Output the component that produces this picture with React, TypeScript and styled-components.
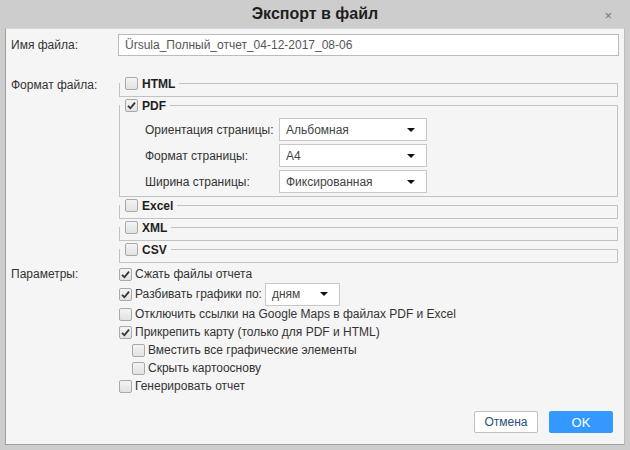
import React from 'react';
import styled, { createGlobalStyle } from 'styled-components';

const GlobalStyle = createGlobalStyle`
  html, body {
    margin: 0;
    padding: 0;
    background: #cdcdcd;
  }
  body {
    font-family: "Liberation Sans", Arial, sans-serif;
    font-size: 12px;
    color: #333333;
  }
`;

const Dialog = styled.div`
  width: 630px;
  height: 450px;
  display: flex;
  flex-direction: column;
  background: #cdcdcd;
`;

const TitleBar = styled.div`
  height: 28px;
  position: relative;
  display: flex;
  align-items: center;
  justify-content: center;
`;

const Title = styled.h1`
  margin: 0;
  font-size: 16px;
  font-weight: bold;
  color: #1e1e1e;
`;

const CloseButton = styled.span`
  position: absolute;
  right: 18px;
  top: 8px;
  font-size: 13px;
  color: #777777;
  cursor: pointer;
`;

const Panel = styled.div`
  flex: 1;
  margin: 0 5px 5px;
  background: #f5f5f5;
  border: 1px solid;
  border-color: #d6d6d6 #bcbcbc #a0a0a0 #a0a0a0;
  display: flex;
  flex-direction: column;
  padding: 5px 5px 11px 5px;
`;

const Form = styled.div`
  display: grid;
  grid-template-columns: 107px 1fr;
  align-items: start;
`;

const Label = styled.label<{ $top?: number }>`
  padding-top: ${(p) => p.$top ?? 0}px;
  line-height: 14px;
  color: #333333;
`;

const TextInput = styled.input`
  height: 22px;
  box-sizing: border-box;
  border: 1px solid #bbbbbb;
  background: #ffffff;
  padding: 0 6px;
  font: inherit;
  font-size: 12px;
  color: #555555;
  outline: none;
  width: 100%;
`;

const Formats = styled.div`
  margin-top: 21px;
  display: flex;
  flex-direction: column;
  padding-right: 1px;
`;

const FormatBox = styled.fieldset`
  margin: 0 0 2px 1px;
  padding: 0;
  border: 1px solid #c2c2c2;
  min-width: 0;
`;

const Legend = styled.legend`
  padding: 0 4px 0 5px;
  display: flex;
  align-items: center;
  gap: 4px;
  height: 13px;
  font-weight: bold;
  color: #1e1e1e;
  font-size: 12px;
`;

const BoxBody = styled.div<{ $open?: boolean }>`
  padding: ${(p) => (p.$open ? '6px 0 3px 25px' : '0 0 6px')};
  display: flex;
  flex-direction: column;
  gap: 3px;
`;

const OptionRow = styled.div`
  display: grid;
  grid-template-columns: 134px 148px;
  align-items: center;
`;

const OptionLabel = styled.span`
  color: #333333;
`;

const Select = styled.div<{ $width?: number }>`
  height: 23px;
  box-sizing: border-box;
  width: ${(p) => p.$width ?? 148}px;
  border: 1px solid #c8c8c8;
  background: #ffffff;
  padding: 0 6px;
  display: flex;
  align-items: center;
  justify-content: space-between;
  color: #444444;
`;

const Caret = styled.span`
  width: 0;
  height: 0;
  margin-right: 5px;
  border-left: 4px solid transparent;
  border-right: 4px solid transparent;
  border-top: 4px solid #111111;
`;

const Params = styled.div`
  display: flex;
  flex-direction: column;
`;

const ParamRow = styled.div<{ $indent?: boolean; $tall?: boolean }>`
  display: flex;
  align-items: center;
  gap: 3px;
  height: ${(p) => (p.$tall ? 22 : 18)}px;
  padding-left: ${(p) => (p.$indent ? 14 : 1)}px;
  color: #333333;
  white-space: nowrap;
`;

const Box = styled.span<{ $checked?: boolean }>`
  width: 13px;
  height: 13px;
  box-sizing: border-box;
  flex: none;
  border: 1px solid #a9a9a9;
  border-radius: 2px;
  background: linear-gradient(#f4f4f4, #e2e2e2);
  display: inline-flex;
  align-items: center;
  justify-content: center;
`;

const Footer = styled.div`
  margin-top: auto;
  display: flex;
  justify-content: flex-end;
  gap: 11px;
  padding-right: 6px;
`;

const Button = styled.button<{ $primary?: boolean }>`
  width: 64px;
  height: 22px;
  box-sizing: border-box;
  font: inherit;
  font-size: ${(p) => (p.$primary ? 13 : 12)}px;
  border: 1px solid ${(p) => (p.$primary ? '#3399ff' : '#c0c0c0')};
  background: ${(p) => (p.$primary ? '#3399ff' : '#ffffff')};
  color: ${(p) => (p.$primary ? '#ffffff' : '#2a4f7a')};
  border-radius: 2px;
  cursor: pointer;
`;

const Check = ({ checked }: { checked?: boolean }) => (
  <Box $checked={checked}>
    {checked && (
      <svg width="9" height="9" viewBox="0 0 9 9">
        <path d="M1 4.8 L3.4 7.2 L8 1.6" fill="none" stroke="#333" strokeWidth="1.8" />
      </svg>
    )}
  </Box>
);

const FormatSection = ({
  name,
  checked,
  children,
}: {
  name: string;
  checked?: boolean;
  children?: React.ReactNode;
}) => (
  <FormatBox>
    <Legend>
      <Check checked={checked} />
      {name}
    </Legend>
    <BoxBody $open={!!children}>{children}</BoxBody>
  </FormatBox>
);

const pdfOptions = [
  { label: 'Ориентация страницы:', value: 'Альбомная' },
  { label: 'Формат страницы:', value: 'A4' },
  { label: 'Ширина страницы:', value: 'Фиксированная' },
];

export default function App() {
  return (
    <Dialog>
      <GlobalStyle />
      <TitleBar>
        <Title>Экспорт в файл</Title>
        <CloseButton>×</CloseButton>
      </TitleBar>
      <Panel>
        <Form>
          <Label $top={4}>Имя файла:</Label>
          <TextInput defaultValue="Ürsula_Полный_отчет_04-12-2017_08-06" />

          <Label $top={22}>Формат файла:</Label>
          <Formats>
            <FormatSection name="HTML" />
            <FormatSection name="PDF" checked>
              {pdfOptions.map((o) => (
                <OptionRow key={o.label}>
                  <OptionLabel>{o.label}</OptionLabel>
                  <Select>
                    {o.value}
                    <Caret />
                  </Select>
                </OptionRow>
              ))}
            </FormatSection>
            <FormatSection name="Excel" />
            <FormatSection name="XML" />
            <FormatSection name="CSV" />
          </Formats>

          <Label $top={2}>Параметры:</Label>
          <Params>
            <ParamRow>
              <Check checked />
              Сжать файлы отчета
            </ParamRow>
            <ParamRow $tall>
              <Check checked />
              Разбивать графики по:
              <Select $width={75}>
                дням
                <Caret />
              </Select>
            </ParamRow>
            <ParamRow>
              <Check />
              Отключить ссылки на Google Maps в файлах PDF и Excel
            </ParamRow>
            <ParamRow>
              <Check checked />
              Прикрепить карту (только для PDF и HTML)
            </ParamRow>
            <ParamRow $indent>
              <Check />
              Вместить все графические элементы
            </ParamRow>
            <ParamRow $indent>
              <Check />
              Скрыть картооснову
            </ParamRow>
            <ParamRow>
              <Check />
              Генерировать отчет
            </ParamRow>
          </Params>
        </Form>
        <Footer>
          <Button>Отмена</Button>
          <Button $primary>OK</Button>
        </Footer>
      </Panel>
    </Dialog>
  );
}
